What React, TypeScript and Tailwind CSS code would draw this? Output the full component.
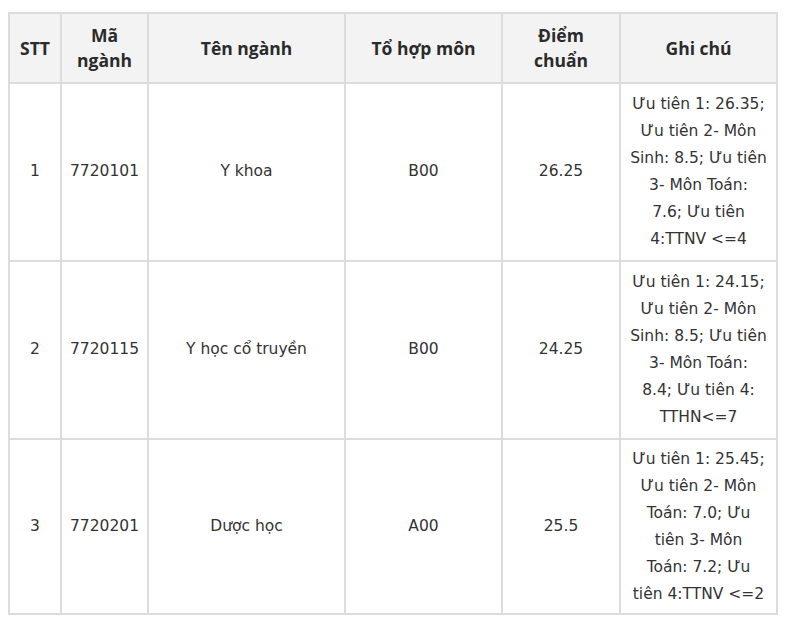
import React from "react";

const rows = [
  {
    stt: "1",
    ma: "7720101",
    ten: "Y khoa",
    to: "B00",
    diem: "26.25",
    ghi: ["Ưu tiên 1: 26.35;", "Ưu tiên 2- Môn", "Sinh: 8.5; Ưu tiên", "3- Môn Toán:", "7.6; Ưu tiên", "4:TTNV <=4"],
    h: "h-[178px]",
  },
  {
    stt: "2",
    ma: "7720115",
    ten: "Y học cổ truyền",
    to: "B00",
    diem: "24.25",
    ghi: ["Ưu tiên 1: 24.15;", "Ưu tiên 2- Môn", "Sinh: 8.5; Ưu tiên", "3- Môn Toán:", "8.4; Ưu tiên 4:", "TTHN<=7"],
    h: "h-[178px]",
  },
  {
    stt: "3",
    ma: "7720201",
    ten: "Dược học",
    to: "A00",
    diem: "25.5",
    ghi: ["Ưu tiên 1: 25.45;", "Ưu tiên 2- Môn", "Toán: 7.0; Ưu", "tiên 3- Môn", "Toán: 7.2; Ưu", "tiên 4:TTNV <=2"],
    h: "h-[175px]",
  },
];

export default function App() {
  const th =
    "border-2 border-[#dcdcdc] bg-[#f3f3f3] text-center align-middle font-bold text-[#2b2b2b] text-[17.5px] leading-[25px] px-1";
  const td =
    "border-2 border-[#dcdcdc] text-center align-middle text-[#333] text-[15.5px] px-1";
  return (
    <div className="w-[793px] h-[633px] bg-white pt-[12px] pl-[8px]">
      <table className="table-fixed border-collapse w-[768px]">
        <colgroup>
          <col className="w-[52px]" />
          <col className="w-[87px]" />
          <col className="w-[197px]" />
          <col className="w-[157px]" />
          <col className="w-[118px]" />
          <col className="w-[157px]" />
        </colgroup>
        <thead>
          <tr className="h-[70px]" style={{ fontFamily: '"Open Sans", "Noto Sans", sans-serif' }}>
            <th className={th}>STT</th>
            <th className={th}>
              Mã
              <br />
              ngành
            </th>
            <th className={th}>Tên ngành</th>
            <th className={th}>Tổ hợp môn</th>
            <th className={th}>
              Điểm
              <br />
              chuẩn
            </th>
            <th className={th}>Ghi chú</th>
          </tr>
        </thead>
        <tbody style={{ fontFamily: '"DejaVu Sans", Verdana, sans-serif' }}>
          {rows.map((r) => (
            <tr key={r.stt} className={r.h}>
              <td className={td}>{r.stt}</td>
              <td className={td}>{r.ma}</td>
              <td className={td}>{r.ten}</td>
              <td className={td}>{r.to}</td>
              <td className={td}>{r.diem}</td>
              <td className={td + " leading-[27px] whitespace-nowrap"}>
                {r.ghi.map((l, i) => (
                  <div key={i}>{l}</div>
                ))}
              </td>
            </tr>
          ))}
        </tbody>
      </table>
    </div>
  );
}
